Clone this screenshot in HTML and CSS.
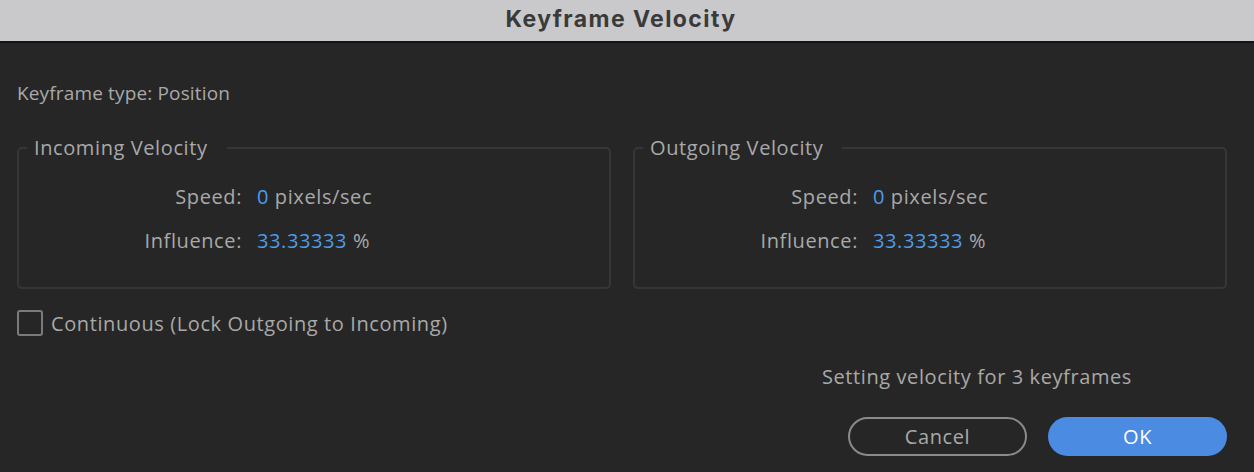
FILE: index.html
```html
<!DOCTYPE html>
<html lang="en">
<head>
<meta charset="utf-8">
<title>Keyframe Velocity</title>
<link rel="stylesheet" href="styles.css">
</head>
<body>
<div class="dialog">
  <header class="titlebar">Keyframe Velocity</header>
  <main class="content">
    <p class="info">Keyframe type: Position</p>
    <div class="groups">
      <fieldset class="group">
        <legend>Incoming Velocity</legend>
        <div class="rows">
          <span class="label">Speed:</span>
          <span class="field"><span class="val">0</span> pixels/sec</span>
          <span class="label">Influence:</span>
          <span class="field"><span class="val">33.33333</span> %</span>
        </div>
      </fieldset>
      <fieldset class="group">
        <legend>Outgoing Velocity</legend>
        <div class="rows">
          <span class="label">Speed:</span>
          <span class="field"><span class="val">0</span> pixels/sec</span>
          <span class="label">Influence:</span>
          <span class="field"><span class="val">33.33333</span> %</span>
        </div>
      </fieldset>
    </div>
    <label class="check"><span class="box"></span><span>Continuous (Lock Outgoing to Incoming)</span></label>
    <p class="note">Setting velocity for 3 keyframes</p>
    <div class="buttons">
      <button class="btn cancel">Cancel</button>
      <button class="btn ok">OK</button>
    </div>
  </main>
</div>
</body>
</html>
```

FILE: styles.css
```css
* { box-sizing: border-box; }
html, body { margin: 0; padding: 0; }
body {
  background: #262626;
  width: 1254px;
  height: 472px;
  overflow: hidden;
  font-family: "Open Sans", "Noto Sans", sans-serif;
  font-size: 20px;
  letter-spacing: 0.6px;
  color: #a9a9a9;
}
.titlebar {
  height: 43px;
  background: #c9c9cb;
  border-bottom: 2px solid #141414;
  display: flex;
  align-items: center;
  justify-content: center;
  padding: 0 12px 4px 0;
  font-family: Inter, "Liberation Sans", sans-serif;
  font-weight: 700;
  font-size: 23px;
  letter-spacing: 1.4px;
  color: #3a3a3a;
}
.content {
  padding: 0 27px 0 17px;
  display: flex;
  flex-direction: column;
}
.info {
  margin: 38px 0 0;
  line-height: 24px;
  font-size: 19px;
  letter-spacing: 0.15px;
}
.groups {
  margin-top: 31px;
  display: grid;
  grid-template-columns: 1fr 1fr;
  column-gap: 22px;
}
.group {
  margin: 0;
  padding: 14px 0 25px;
  border: 2px solid #363636;
  border-radius: 5px;
  min-width: 0;
}
.group legend {
  margin-left: 8px;
  padding: 0 19px 0 7px;
  line-height: 24px;
  color: #a9a9a9;
}
.rows {
  display: grid;
  grid-template-columns: 223px auto;
  grid-auto-rows: 44px;
  column-gap: 15px;
  align-items: center;
}
.label { text-align: right; }
.val { color: #4d9cec; }
.check {
  margin-top: 21px;
  display: flex;
  align-items: center;
  gap: 8px;
  height: 26px;
}
.box {
  width: 26px;
  height: 26px;
  border: 2px solid #7b7b7b;
  border-radius: 3px;
}
.note {
  margin: 29px 95px 0 0;
  line-height: 24px;
  text-align: right;
}
.buttons {
  margin-top: 28px;
  display: flex;
  justify-content: flex-end;
  gap: 21px;
}
.btn {
  width: 179px;
  height: 39px;
  border-radius: 20px;
  font-family: inherit;
  font-size: 20px;
  letter-spacing: 0.6px;
  padding: 0;
}
.cancel {
  background: transparent;
  border: 2px solid #8a8a8a;
  color: #a9a9a9;
}
.ok {
  background: #4b8be2;
  border: none;
  color: #ffffff;
}
```
